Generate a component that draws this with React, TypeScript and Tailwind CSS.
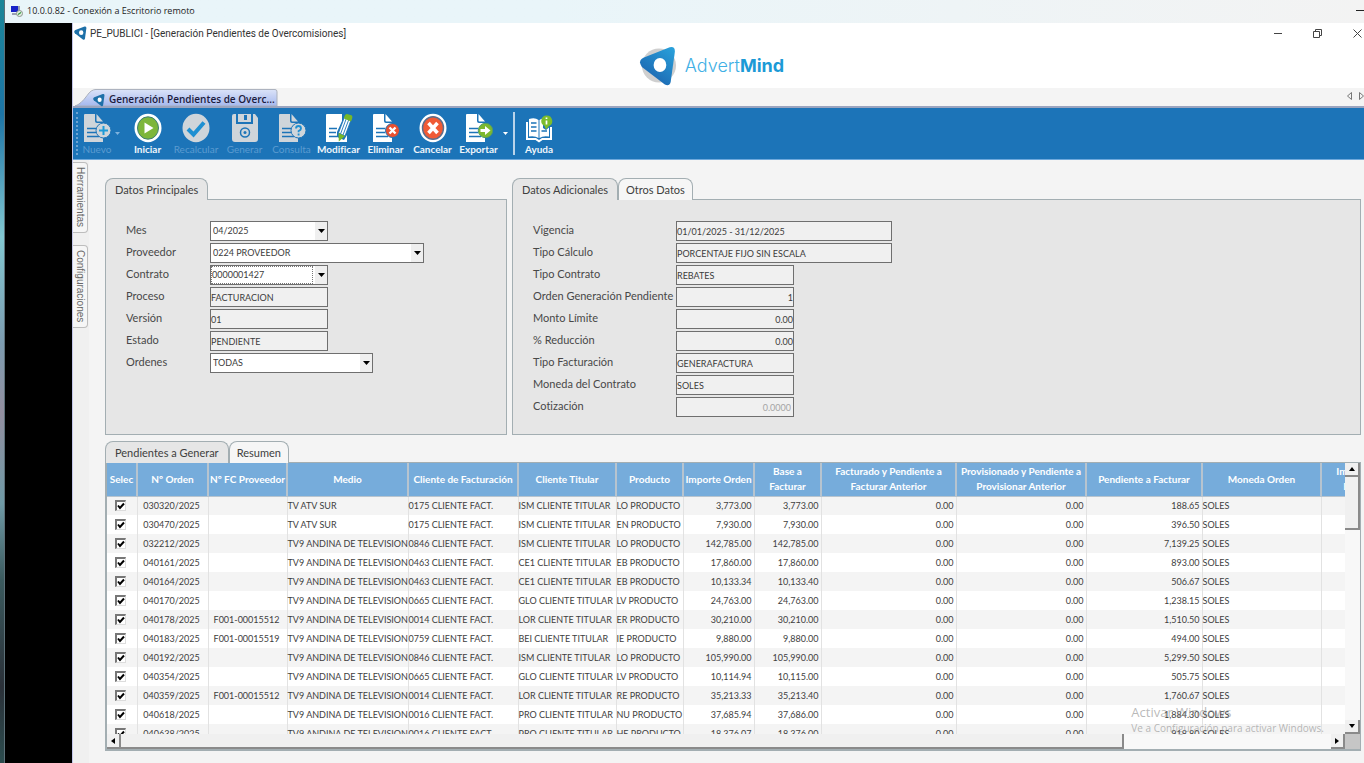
import { useState } from "react";
import type { ReactNode } from "react";
import clsx from "clsx";

const ORDERS = [
  ["030320/2025", "", "TV ATV SUR", "0175 CLIENTE FACT.", "ISM CLIENTE TITULAR", "LO PRODUCTO", "3,773.00", "3,773.00", "188.65"],
  ["030470/2025", "", "TV ATV SUR", "0175 CLIENTE FACT.", "ISM CLIENTE TITULAR", "EN PRODUCTO", "7,930.00", "7,930.00", "396.50"],
  ["032212/2025", "", "TV9 ANDINA DE TELEVISION", "0846 CLIENTE FACT.", "ISM CLIENTE TITULAR", "LO PRODUCTO", "142,785.00", "142,785.00", "7,139.25"],
  ["040161/2025", "", "TV9 ANDINA DE TELEVISION", "0463 CLIENTE FACT.", "CE1 CLIENTE TITULAR", "EB PRODUCTO", "17,860.00", "17,860.00", "893.00"],
  ["040164/2025", "", "TV9 ANDINA DE TELEVISION", "0463 CLIENTE FACT.", "CE1 CLIENTE TITULAR", "EB PRODUCTO", "10,133.34", "10,133.40", "506.67"],
  ["040170/2025", "", "TV9 ANDINA DE TELEVISION", "0665 CLIENTE FACT.", "GLO CLIENTE TITULAR", "LV PRODUCTO", "24,763.00", "24,763.00", "1,238.15"],
  ["040178/2025", "F001-00015512", "TV9 ANDINA DE TELEVISION", "0014 CLIENTE FACT.", "LOR CLIENTE TITULAR", "ER PRODUCTO", "30,210.00", "30,210.00", "1,510.50"],
  ["040183/2025", "F001-00015519", "TV9 ANDINA DE TELEVISION", "0759 CLIENTE FACT.", "BEI CLIENTE TITULAR", "IE PRODUCTO", "9,880.00", "9,880.00", "494.00"],
  ["040192/2025", "", "TV9 ANDINA DE TELEVISION", "0846 CLIENTE FACT.", "ISM CLIENTE TITULAR", "LO PRODUCTO", "105,990.00", "105,990.00", "5,299.50"],
  ["040354/2025", "", "TV9 ANDINA DE TELEVISION", "0665 CLIENTE FACT.", "GLO CLIENTE TITULAR", "LV PRODUCTO", "10,114.94", "10,115.00", "505.75"],
  ["040359/2025", "F001-00015512", "TV9 ANDINA DE TELEVISION", "0014 CLIENTE FACT.", "LOR CLIENTE TITULAR", "RE PRODUCTO", "35,213.33", "35,213.40", "1,760.67"],
  ["040618/2025", "", "TV9 ANDINA DE TELEVISION", "0016 CLIENTE FACT.", "PRO CLIENTE TITULAR", "NU PRODUCTO", "37,685.94", "37,686.00", "1,884.30"],
  ["040638/2025", "", "TV9 ANDINA DE TELEVISION", "0016 CLIENTE FACT.", "PRO CLIENTE TITULAR", "HE PRODUCTO", "18,376.07", "18,376.00", "918.80"],
];

const COLUMNS = [
  { title: "Selec", width: "w-[30px]" },
  { title: "Nº Orden", width: "w-[71px]" },
  { title: "Nº FC Proveedor", width: "w-[79px]" },
  { title: "Medio", width: "w-[121px]" },
  { title: "Cliente de Facturación", width: "w-[110px]" },
  { title: "Cliente Titular", width: "w-[98px]" },
  { title: "Producto", width: "w-[67px]" },
  { title: "Importe Orden", width: "w-[71px]" },
  { title: "Base a\nFacturar", width: "w-[67px]" },
  { title: "Facturado y Pendiente a\nFacturar Anterior", width: "w-[135px]" },
  { title: "Provisionado y Pendiente a\nProvisionar Anterior", width: "w-[130px]" },
  { title: "Pendiente a Facturar", width: "w-[116px]" },
  { title: "Moneda Orden", width: "w-[119px]" },
  { title: "Importe\nBase", width: "w-[66px]" },
];

type FieldDef = {
  id: string;
  label: string;
  value: string;
  kind?: "select" | "combo";
  width: string;
  align?: string;
};

const MAIN_FIELDS: FieldDef[] = [
  { id: "mes", label: "Mes", value: "04/2025", kind: "select", width: "w-[118px]" },
  { id: "proveedor", label: "Proveedor", value: "0224 PROVEEDOR", kind: "select", width: "w-[214px]" },
  { id: "contrato", label: "Contrato", value: "0000001427", kind: "combo", width: "w-[118px]" },
  { id: "proceso", label: "Proceso", value: "FACTURACION", width: "w-[118px]" },
  { id: "version", label: "Versión", value: "01", width: "w-[118px]" },
  { id: "estado", label: "Estado", value: "PENDIENTE", width: "w-[118px]" },
  { id: "ordenes", label: "Ordenes", value: "TODAS", kind: "select", width: "w-[163px]" },
];

const EXTRA_FIELDS: FieldDef[] = [
  { id: "vigencia", label: "Vigencia", value: "01/01/2025 - 31/12/2025", width: "w-[216px]" },
  { id: "calculo", label: "Tipo Cálculo", value: "PORCENTAJE FIJO SIN ESCALA", width: "w-[216px]" },
  { id: "tipo-contrato", label: "Tipo Contrato", value: "REBATES", width: "w-[118px]" },
  { id: "orden", label: "Orden Generación Pendiente", value: "1", width: "w-[118px]", align: "text-right" },
  { id: "monto", label: "Monto Límite", value: "0.00", width: "w-[118px]", align: "text-right" },
  { id: "reduccion", label: "% Reducción", value: "0.00", width: "w-[118px]", align: "text-right" },
  { id: "facturacion", label: "Tipo Facturación", value: "GENERAFACTURA", width: "w-[118px]" },
  { id: "moneda", label: "Moneda del Contrato", value: "SOLES", width: "w-[118px]" },
  { id: "cotizacion", label: "Cotización", value: "0.0000", width: "w-[118px]", align: "pr-0.5 text-right" },
];

function Brand({ className, halo }: { className?: string; halo?: boolean }) {
  return (
    <svg viewBox="0 0 38 41" className={className} aria-hidden="true">
      <defs>
        <linearGradient id="brand" x1="1" y1="0" x2="0.3" y2="1">
          <stop offset="0" stopColor="#2aa3dc" />
          <stop offset="1" stopColor="#1b62ae" />
        </linearGradient>
      </defs>
      {halo && <circle cx="20" cy="20" r="17.5" fill="#cfcfcf" />}
      <path
        d="M4 12 31 1.400Q36.500 0 36.300 6L32 37Q30.500 42 26 39.500L2.500 21.500Q-2 15 4 12Z"
        fill={halo ? "url(#brand)" : "#1d70a8"}
      />
      <ellipse cx="21" cy="19.500" rx="6.500" ry="7.200" fill="#fff" />
    </svg>
  );
}

function Sheet({ color, children }: { color: string; children?: ReactNode }) {
  return (
    <svg viewBox="0 0 28 30" className="h-[30px] w-7" aria-hidden="true">
      <path d="M2 1H12V8Q12 10 14 10H20V29H1V2Q1 1 2 1Z" fill={color} />
      <path d="M13.500 1 20 8.500H14.500Q13.500 8.500 13.500 7.500Z" fill={color} />
      <path d="M4 15.500H13M4 19.500H13M4 23.500H16" stroke="#1c74b8" strokeWidth="1.300" />
      {children}
    </svg>
  );
}

const OFF = "#cfd5da";

const newIcon = (
  <Sheet color={OFF}>
    <circle cx="20.500" cy="17.500" r="7.500" fill={OFF} stroke="#1c74b8" />
    <path d="M20.500 13V22M16 17.500H25" stroke="#1e9bd8" strokeWidth="2" />
  </Sheet>
);
const startIcon = (
  <svg viewBox="0 0 28 30" className="h-[30px] w-7" aria-hidden="true">
    <ellipse cx="14" cy="15" rx="13.500" ry="14.200" fill="#fff" />
    <ellipse cx="14" cy="15" rx="10.500" ry="11.200" fill="#7db63a" stroke="#3d7f72" />
    <path d="M10.500 9.500 19.500 15 10.500 20.500Z" fill="#fff" />
  </svg>
);
const recalcIcon = (
  <svg viewBox="0 0 28 30" className="h-[30px] w-7" aria-hidden="true">
    <ellipse cx="14" cy="15" rx="13.500" ry="14.200" fill={OFF} />
    <path d="M6 16 11.500 21.500 22 9.500" fill="none" stroke="#1e90d2" strokeWidth="4" />
  </svg>
);
const generateIcon = (
  <svg viewBox="0 0 28 30" className="h-[30px] w-7" aria-hidden="true">
    <path d="M3 1H5V10Q5 11 6 11H21Q22 11 22 10V1H24L27 5V26Q27 29 24 29H4Q1 29 1 26V3Q1 1 3 1Z" fill={OFF} />
    <path d="M7 1H20V9H7Z" fill={OFF} />
    <path d="M5 1H7V9H20V1H22V11H5ZM13 2H16V7H13Z" fill="#1c74b8" />
    <circle cx="14" cy="19.500" r="4.500" fill="none" stroke="#1c74b8" strokeWidth="1.500" />
    <circle cx="14" cy="19.500" r="1.500" fill="#1c74b8" />
  </svg>
);
const queryIcon = (
  <Sheet color={OFF}>
    <circle cx="20.500" cy="17.500" r="7.500" fill={OFF} stroke="#1c74b8" />
    <path d="M18 15.500Q18 13 20.500 13T23 15.500Q23 17 20.600 18V19.200M20.600 20.500V22.500" fill="none" stroke="#1e90d2" strokeWidth="1.800" />
  </Sheet>
);
const editIcon = (
  <svg viewBox="0 0 28 30" className="h-[30px] w-7" aria-hidden="true">
    <path d="M2 1H17V8L12 19V24L19 27V29H1V2Q1 1 2 1Z" fill="#fff" />
    <path d="M19 27 22 22V29H15Z" fill="#fff" />
    <path d="M4 15.500H12M4 19.500H11M4 23.500H12" stroke="#1c74b8" strokeWidth="1.300" />
    <path d="M19.500 4 26 7 20 23 13.500 20Z" fill="#fff" stroke="#1c74b8" strokeWidth="0.800" />
    <path d="M21.500 5 15.500 21M24 6 18 22" stroke="#1c74b8" strokeWidth="0.900" />
    <path d="M19 5.500Q19.500 1 22 1L26.500 2.200Q28.500 3.500 26 8.500Z" fill="#76b729" />
    <path d="M13.500 20 20 23 13.800 28.500Z" fill="#76b729" />
  </svg>
);
const deleteIcon = (
  <Sheet color="#fff">
    <circle cx="20.500" cy="17.500" r="7" fill="#e9502f" stroke="#1c74b8" />
    <path d="M17.500 14.500 23.500 20.500M23.500 14.500 17.500 20.500" stroke="#fff" strokeWidth="2.400" />
  </Sheet>
);
const cancelIcon = (
  <svg viewBox="0 0 28 30" className="h-[30px] w-7" aria-hidden="true">
    <ellipse cx="14" cy="15" rx="13.500" ry="14.200" fill="#fff" />
    <ellipse cx="14" cy="15" rx="10.500" ry="11.200" fill="#f05a35" stroke="#5c6d8c" strokeWidth="1.400" />
    <path d="M9.500 10 18.500 20M18.500 10 9.500 20" stroke="#fff" strokeWidth="3.600" />
  </svg>
);
const exportIcon = (
  <Sheet color="#fff">
    <circle cx="20.500" cy="17.500" r="7.200" fill="#7cb82f" stroke="#4f9a6a" />
    <path d="M15.500 16H20V13L25.500 17.500 20 22V19H15.500Z" fill="#fff" />
  </Sheet>
);
const helpIcon = (
  <svg viewBox="0 0 28 30" className="h-[30px] w-7" aria-hidden="true">
    <path d="M1 9H3V25H11L14 27 17 25H25V14H27V27H17.500L14 29.500 10.500 27H1Z" fill="#fff" />
    <path d="M4 6Q10 4 13.500 7V25Q10 22.500 4 23.500Z" fill="#fff" />
    <path d="M14.500 7Q16 5.500 18 5.500V15L21 17 24 14.500V23.500Q18 22.500 14.500 25Z" fill="#fff" />
    <path d="M6 10H11.500M6 14H11.500M6 18H11.500M16.500 18H22" stroke="#1c74b8" strokeWidth="1.600" />
    <path d="M21.500 2.500A5.500 5.500 0 0 1 24 13L21 16.500 19.500 13A5.500 5.500 0 0 1 21.500 2.500Z" fill="#7cbc2c" />
    <path d="M21.500 4.500V6M21.500 7.500V11.500" stroke="#fff" strokeWidth="1.700" />
  </svg>
);

function ToolButton({
  icon,
  label,
  width = "w-[47px]",
  disabled,
}: {
  icon: ReactNode;
  label: string;
  width?: string;
  disabled?: boolean;
}) {
  return (
    <button type="button" disabled={disabled} className={clsx("flex flex-col items-center pt-[5px]", width)}>
      {icon}
      <span className={clsx("text-[10px] leading-[13px]", disabled ? "text-[#5b9bd0]" : "font-bold text-[#eef5fb]")}>
        {label}
      </span>
    </button>
  );
}

function MenuArrow({ label, color }: { label: string; color: string }) {
  return (
    <button type="button" aria-label={label} className="flex w-2 items-center justify-center">
      <svg viewBox="0 0 5 3" className={clsx("h-[3px] w-[5px]", color)}>
        <path d="M0 0H5L2.500 3Z" fill="currentColor" />
      </svg>
    </button>
  );
}

function Field({ field }: { field: FieldDef }) {
  const box = "block h-5 w-full rounded-none border border-[#6f6f6f] text-[9px] leading-[18px] outline-none";
  const disabled = field.id === "cotizacion";
  return (
    <div className="flex items-start">
      <label htmlFor={field.id} className="w-[143px] shrink-0 whitespace-nowrap text-[11px] leading-[18px] text-[#484848]">
        {field.label}
      </label>
      <div className={clsx("relative", field.width)}>
        {field.kind === "select" && (
          <select id={field.id} className={clsx(box, "appearance-none bg-white pl-0.5 text-[#3c3c3c]")}>
            <option>{field.value}</option>
          </select>
        )}
        {field.kind === "combo" && (
          <div className={clsx(box, "bg-white text-[#3c3c3c]")}>
            <input
              id={field.id}
              defaultValue={field.value}
              className="block h-[18px] w-[102px] border border-dotted border-[#777] outline-none"
            />
          </div>
        )}
        {!field.kind && (
          <input
            id={field.id}
            readOnly
            defaultValue={field.value}
            className={clsx(box, "bg-[#f0f0f0]", disabled ? "text-[#a5a5a5]" : "text-[#3c3c3c]", field.align)}
          />
        )}
        {field.kind && (
          <span className="pointer-events-none absolute inset-y-px right-px flex w-3 items-center justify-center bg-[#efefef]">
            <svg viewBox="0 0 7 4" className="h-1 w-[7px]">
              <path d="M0 0H7L3.500 4Z" fill="#000" />
            </svg>
          </span>
        )}
      </div>
    </div>
  );
}

function Tab({ active, onClick, children }: { active: boolean; onClick?: () => void; children: ReactNode }) {
  return (
    <button
      type="button"
      role="tab"
      aria-selected={active}
      onClick={onClick}
      className={clsx(
        "relative h-[22px] rounded-t-lg border border-b-0 border-[#a3aeb2] text-[11px] leading-5 text-[#404040]",
        active ? "z-10 bg-[#e6e6e6] px-[9px]" : "bg-[#f6f6f6] px-[7px]",
      )}
    >
      {children}
    </button>
  );
}

function ScrollButton({ label, d, className }: { label: string; d: string; className?: string }) {
  return (
    <button
      type="button"
      aria-label={label}
      className={clsx("flex shrink-0 items-center justify-center border-r-2 border-b-2 border-[#8a8a8a] bg-[#f0f0f0]", className)}
    >
      <svg viewBox="0 0 8 8" className="size-2">
        <path d={d} fill="#000" />
      </svg>
    </button>
  );
}

function OrdersGrid() {
  return (
    <div className="grid min-h-0 flex-1 grid-cols-[minmax(0,1fr)_15px] grid-rows-[minmax(0,1fr)_15px] border border-b-2 border-l-2 border-[#a3aeb2] bg-white">
      <div className="overflow-hidden">
        <table className="w-[1280px] table-fixed border-collapse text-[9px] leading-[18px] text-[#3e3e3e]">
          <thead>
            <tr className="h-[33px] bg-[#76acdb]">
              {COLUMNS.map((c) => (
                <th
                  key={c.title}
                  className={clsx(
                    "border-r-2 border-b border-[#b7c4cf] p-0 text-[10px] leading-[15px] font-bold whitespace-pre text-white",
                    c.width,
                  )}
                >
                  {c.title}
                </th>
              ))}
            </tr>
          </thead>
          <tbody className="whitespace-nowrap">
            {ORDERS.map(([order, invoice, medium, billing, holder, product, amount, base, pending]) => (
              <tr key={order} className="h-[19px] odd:bg-[#f4f4f4] *:border-r *:border-[#e2e2e2] *:py-0 *:pr-0.5 *:pl-0">
                <td>
                  <input
                    type="checkbox"
                    defaultChecked
                    aria-label={order}
                    className="mx-auto block size-[11px] appearance-none border border-t-2 border-l-2 border-[#dcdcdc] border-t-[#777] border-l-[#777] bg-white bg-[url('data:image/svg+xml,%3Csvg%20xmlns=%22http://www.w3.org/2000/svg%22%20viewBox=%220%200%208%208%22%3E%3Cpath%20d=%22M1%203.500%203%206%207%201.500%22%20fill=%22none%22%20stroke=%22black%22%20stroke-width=%222%22/%3E%3C/svg%3E')] bg-contain"
                  />
                </td>
                <td className="text-center">{order}</td>
                <td className="text-center">{invoice}</td>
                <td>{medium}</td>
                <td>{billing}</td>
                <td>{holder}</td>
                <td>{product}</td>
                <td className="text-right">{amount}</td>
                <td className="text-right">{base}</td>
                <td className="text-right">0.00</td>
                <td className="text-right">0.00</td>
                <td className="text-right">{pending}</td>
                <td>SOLES</td>
                <td />
              </tr>
            ))}
          </tbody>
        </table>
      </div>
      <div className="flex flex-col bg-[#f8f8f8]">
        <ScrollButton label="Subir" d="M1 6 4 2 7 6Z" className="h-3.5" />
        <div className="h-[53px] border-r-2 border-b-2 border-[#8a8a8a] bg-[#f0f0f0]" />
        <div className="flex-1" />
        <ScrollButton label="Bajar" d="M1 2H7L4 6Z" className="h-3.5" />
      </div>
      <div className="flex bg-[#f8f8f8]">
        <ScrollButton label="Izquierda" d="M6 1V7L2 4Z" className="w-3.5" />
        <div className="w-[81%] border-r-2 border-b-2 border-[#8a8a8a] bg-[#f0f0f0]" />
        <div className="flex-1" />
        <ScrollButton label="Derecha" d="M2 1V7L6 4Z" className="w-3.5" />
      </div>
      <div className="bg-[#c6c6c6]" />
    </div>
  );
}

export default function App() {
  const [extraTab, setExtraTab] = useState(0);
  const [gridTab, setGridTab] = useState(0);

  return (
    <div className="relative flex h-screen min-h-[600px] overflow-hidden bg-[#f4f4f4] font-['Lato',sans-serif] [font-variant-ligatures:none]">
      {/* desktop wallpaper behind the remote window */}
      <div className="w-[5px] shrink-0 border-r border-[#5d7078] bg-[linear-gradient(#1b8698,#1d75a6_15%,#82c8d2_31%,#7d9cb0_45%,#938fa0_54%,#6f9aa6_66%,#3b5a5e_76%,#2a3038_90%,#2c4c4e)]" />

      <div className="flex min-w-0 flex-1 flex-col">
        <header className="flex h-[23px] shrink-0 items-center gap-1 bg-linear-to-r from-[#e9f5f9] via-[#e9f5f9] via-40% to-[#f3f3f3] pl-1.5 pb-0.5 font-['Open_Sans',sans-serif] text-[9px] text-[#1c1c1c]">
          <svg viewBox="0 0 12 12" className="size-3">
            <path d="M0 1H7V7H0Z" fill="#1722c8" />
            <path d="M7 1H9V8H7ZM1 8H6V10H1Z" fill="#9aa1b3" />
            <circle cx="8.500" cy="8.500" r="3" fill="#e5eee3" stroke="#8b958c" />
            <path d="M7 9.500 10 7.500" stroke="#2f9a3a" strokeWidth="1.200" />
          </svg>
          <span>10.0.0.82 - Conexión a Escritorio remoto</span>
          <button type="button" aria-label="Minimizar escritorio remoto" className="ml-auto h-px w-2 bg-[#222]" />
        </header>

        <div className="flex min-h-0 flex-1">
          <div className="w-[67px] shrink-0 bg-black" />

          <main className="flex min-w-0 flex-1 flex-col border-l border-[#c3c6ea]">
            <div className="flex h-[22px] shrink-0 items-center bg-white pb-0.5 pl-px font-['Roboto',sans-serif] text-[10px] text-[#333]">
              <Brand className="mr-[3px] h-3.5 w-[13px]" />
              <h1>PE_PUBLICI - [Generación Pendientes de Overcomisiones]</h1>
              <div className="ml-auto flex items-center gap-[31px] pr-0.5 text-[#444]">
                <button type="button" aria-label="Minimizar" className="h-px w-2 bg-[#444]" />
                <button type="button" aria-label="Restaurar">
                  <svg viewBox="0 0 9 9" className="size-[9px]" fill="none" stroke="currentColor">
                    <path d="M.5 2.500H6.500V8.500H.5ZM2.500 2V.5H8.500V6.500H7" />
                  </svg>
                </button>
                <button type="button" aria-label="Cerrar">
                  <svg viewBox="0 0 9 9" className="size-[9px]" fill="none" stroke="currentColor">
                    <path d="M.5.5 8.500 8.500M8.500.5.5 8.500" />
                  </svg>
                </button>
              </div>
            </div>

            <div className="flex h-[43px] shrink-0 items-center justify-center gap-2 bg-white pr-3.5 pb-px">
              <Brand halo className="h-10 w-[38px]" />
              <span className="font-['Inter',sans-serif] text-[18px] leading-6 font-light text-[#3fb0e5]">
                Advert<b className="font-bold text-[#1c9ad6]">Mind</b>
              </span>
            </div>

            <div className="flex h-5 shrink-0 items-end border-b-2 border-[#9aa4bf]">
              <button type="button" className="relative flex h-[17px] w-[205px] items-center gap-1 pt-1 pl-5 font-['Open_Sans',sans-serif] text-[10px] font-semibold whitespace-nowrap text-[#1b1b3c]">
                <svg viewBox="0 0 205 18" preserveAspectRatio="none" className="absolute inset-0 size-full">
                  <defs>
                    <linearGradient id="tab" x1="0" y1="0" x2="0" y2="1">
                      <stop offset="0" stopColor="#dbe3f8" />
                      <stop offset="1" stopColor="#a5b8ee" />
                    </linearGradient>
                  </defs>
                  <path d="M2 18Q8 16 14 7 18 .5 23 .5H202Q204 .5 204 3V18Z" fill="url(#tab)" stroke="#a9afbb" />
                </svg>
                <Brand className="relative h-3.5 w-3" />
                <span className="relative">Generación Pendientes de Overc...</span>
              </button>
              <div className="mb-1.5 ml-auto flex gap-[7px]">
                <button type="button" aria-label="Pestaña anterior">
                  <svg viewBox="0 0 5 8" className="h-2 w-[5px]" fill="none" stroke="#777">
                    <path d="M4.500.5V7.500L.5 4Z" />
                  </svg>
                </button>
                <button type="button" aria-label="Pestaña siguiente">
                  <svg viewBox="0 0 5 8" className="h-2 w-[5px]" fill="none" stroke="#777">
                    <path d="M.5.5V7.500L4.500 4Z" />
                  </svg>
                </button>
              </div>
            </div>

            <div role="toolbar" className="flex h-[52px] shrink-0 border-b border-[#6fa9dc] bg-[#1c74b8] pl-[3px]">
              <div className="my-1 mr-[3px] border-l-2 border-dotted border-[#6ba3d2]" />
              <ToolButton icon={newIcon} label="Nuevo" width="w-8" disabled />
              <MenuArrow label="Opciones de nuevo" color="text-[#7fb3de]" />
              <div className="w-[3px]" />
              <ToolButton icon={startIcon} label="Iniciar" />
              <ToolButton icon={recalcIcon} label="Recalcular" width="w-[50px]" disabled />
              <ToolButton icon={generateIcon} label="Generar" disabled />
              <ToolButton icon={queryIcon} label="Consulta" disabled />
              <ToolButton icon={editIcon} label="Modificar" />
              <ToolButton icon={deleteIcon} label="Eliminar" />
              <ToolButton icon={cancelIcon} label="Cancelar" />
              <ToolButton icon={exportIcon} label="Exportar" width="w-[45px]" />
              <MenuArrow label="Opciones de exportar" color="text-white" />
              <div className="mx-1 my-1 w-0.5 bg-[#b9d3ea]" />
              <ToolButton icon={helpIcon} label="Ayuda" width="w-10" />
            </div>

            <div className="flex min-h-0 flex-1">
              <aside className="flex w-4 shrink-0 flex-col items-start gap-3 bg-[#f0f0f0] pt-0.5 font-['Liberation_Sans',sans-serif] text-[10px] leading-3 text-[#666]">
                <button type="button" className="h-[71px] w-[15px] rounded-r border border-l-0 border-[#bdbdbd] bg-[#f6f6f6] pt-1 text-start [writing-mode:vertical-rl]">
                  Herramientas
                </button>
                <button type="button" className="h-[83px] w-[15px] rounded-r border border-l-0 border-[#bdbdbd] bg-[#f6f6f6] pt-1 text-start [writing-mode:vertical-rl]">
                  Configuraciones
                </button>
              </aside>

              <div className="flex min-w-0 flex-1 flex-col pt-[18px] pr-[3px] pb-3 pl-4">
                <div className="flex gap-[5px]">
                  <section className="flex w-[402px] shrink-0 flex-col">
                    <div role="tablist" className="-mb-px flex">
                      <Tab active>Datos Principales</Tab>
                    </div>
                    <div className="flex flex-1 flex-col gap-0.5 border border-[#a3aeb2] bg-[#e6e6e6] pt-[21px] pl-5 [&_label]:w-[84px]">
                      {MAIN_FIELDS.map((f) => (
                        <Field key={f.id} field={f} />
                      ))}
                    </div>
                  </section>
                  <section className="flex min-w-0 flex-1 flex-col">
                    <div role="tablist" className="-mb-px flex">
                      <Tab active={extraTab === 0} onClick={() => setExtraTab(0)}>Datos Adicionales</Tab>
                      <Tab active={extraTab === 1} onClick={() => setExtraTab(1)}>Otros Datos</Tab>
                    </div>
                    <div className="flex flex-col gap-0.5 border border-[#a3aeb2] bg-[#e6e6e6] pt-[21px] pb-[17px] pl-5">
                      {EXTRA_FIELDS.map((f) => (
                        <Field key={f.id} field={f} />
                      ))}
                    </div>
                  </section>
                </div>

                <section className="mt-1.5 flex min-h-0 flex-1 flex-col">
                  <div role="tablist" className="-mb-px flex shrink-0">
                    <Tab active={gridTab === 0} onClick={() => setGridTab(0)}>Pendientes a Generar</Tab>
                    <Tab active={gridTab === 1} onClick={() => setGridTab(1)}>Resumen</Tab>
                  </div>
                  <OrdersGrid />
                </section>
              </div>
            </div>
          </main>
        </div>
      </div>

      {/* activation watermark floats over the whole desktop */}
      <div className="pointer-events-none absolute right-10 bottom-7 z-20 font-['Open_Sans',sans-serif] whitespace-nowrap text-[#8a8a8a]/60">
        <p className="text-[13px] leading-[18px]">Activar Windows</p>
        <p className="text-[10px] leading-[14px]">Ve a Configuración para activar Windows.</p>
      </div>
    </div>
  );
}
